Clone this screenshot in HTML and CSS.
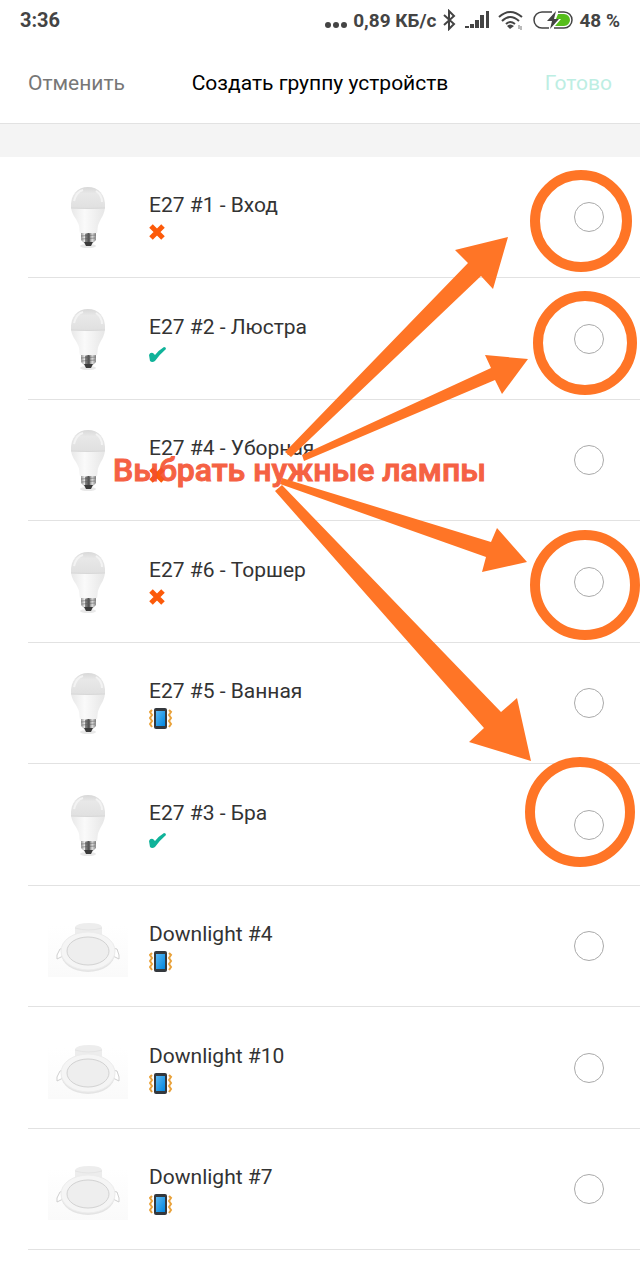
FILE: index.html
```html
<!DOCTYPE html>
<html lang="ru">
<head>
    <meta charset="UTF-8">
    <meta name="viewport" content="width=device-width, initial-scale=1.0">
    <title>Создать группу устройств</title>
    <link rel="stylesheet" href="styles.css">
</head>
<body>
    <!-- Shared icons -->
    <svg class="sprite" aria-hidden="true">
        <defs>
            <linearGradient id="dome" x1="0" y1="0" x2="0" y2="1">
                <stop offset="0" stop-color="#d8d8d8"/>
                <stop offset="0.3" stop-color="#e8e8e8"/>
                <stop offset="1" stop-color="#e0e0e0"/>
            </linearGradient>
            <linearGradient id="neck" x1="0" y1="0" x2="1" y2="0">
                <stop offset="0" stop-color="#e8e8e8"/>
                <stop offset="0.4" stop-color="#fafafa"/>
                <stop offset="1" stop-color="#e6e6e6"/>
            </linearGradient>
            <linearGradient id="metal" x1="0" y1="0" x2="1" y2="0">
                <stop offset="0" stop-color="#999"/>
                <stop offset="0.25" stop-color="#eee"/>
                <stop offset="0.5" stop-color="#555"/>
                <stop offset="0.75" stop-color="#ddd"/>
                <stop offset="1" stop-color="#888"/>
            </linearGradient>
            <linearGradient id="screen" x1="0" y1="0" x2="1" y2="1">
                <stop offset="0" stop-color="#5bb8f2"/>
                <stop offset="1" stop-color="#0086e0"/>
            </linearGradient>
            <linearGradient id="backdrop" x1="0" y1="0" x2="0" y2="1">
                <stop offset="0" stop-color="#fff"/>
                <stop offset="1" stop-color="#fafafa"/>
            </linearGradient>
        </defs>
        <symbol id="bulb" viewBox="0 0 80 80">
            <ellipse cx="40" cy="69" rx="8" ry="2" fill="#e8e8e8"/>
            <path d="M23 29C23 37 28 41 30 46C32 50 31 53 32 56H49C50 53 49 50 51 46C53 41 57 37 57 29Z" fill="url(#neck)"/>
            <path d="M23 31C22 17 30 10 40 10S58 17 57 31Q40 32 23 31Z" fill="url(#dome)"/>
            <path d="M23 31Q40 32 57 31" fill="none" stroke="#d8d8d8"/>
            <path d="M26 24Q28 15 35 13M48 14Q54 18 54 25" fill="none" stroke="#f3f3f3" stroke-width="2"/>
            <path d="M33 56H48V63L45 66H36L33 63Z" fill="url(#metal)"/>
            <path d="M33 59L48 58M34 62L47 61" stroke="#666" stroke-width="0.6"/>
            <path d="M37 57H42V66H37Z" fill="#555" opacity="0.6"/>
            <path d="M36 65H45L43 69H38Z" fill="#3b3b3b"/>
        </symbol>
        <symbol id="downlight" viewBox="0 0 80 80">
            <rect y="20" width="80" height="51" fill="url(#backdrop)"/>
            <path d="M27 30V21Q29 17 41 17Q53 17 54 21V30Z" fill="#ededed"/>
            <path d="M27 22Q40 26 54 22" fill="none" stroke="#e4e4e4"/>
            <path d="M16 42L12 43L9 49V53L15 50M64 42L69 43L71 49V53L65 50" fill="#fff" stroke="#cfcfcf" stroke-width="1"/>
            <ellipse cx="40" cy="47" rx="27" ry="19" fill="#e4e4e4"/>
            <ellipse cx="40" cy="45" rx="27" ry="19" fill="#f5f5f5" stroke="#ececec"/>
            <ellipse cx="40" cy="45" rx="21" ry="14" fill="#eee" stroke="#d2d2d2"/>
        </symbol>
        <symbol id="cross" viewBox="0 0 24 24">
            <path d="M2 5L14 17M14 5L2 17" stroke="#fc5a0a" stroke-width="5"/>
        </symbol>
        <symbol id="check" viewBox="0 0 24 24">
            <path d="M0 12Q1 9 4 10L6 12Q10 7 15 4Q17 4 17 6Q10 12 6 18Q3 20 1 18Z" fill="#10b39a"/>
        </symbol>
        <symbol id="phone" viewBox="0 0 24 24">
            <path d="M3 3L1 5L3 8L1 11L3 14L1 17L3 20M20 3L22 5L20 8L22 11L20 14L22 17L20 20" fill="none" stroke="#e9a23b" stroke-width="2"/>
            <rect x="5" y="1" width="13" height="21" rx="2" fill="#34383d"/>
            <rect x="7" y="4" width="9" height="15" fill="url(#screen)"/>
        </symbol>
    </svg>

    <div class="screen">
        <div class="status-bar">
            <span class="time">3:36</span>
            <div class="status-info">
                <svg class="dots" viewBox="0 0 22 22" aria-hidden="true">
                    <circle cx="3" cy="16" r="3"/><circle cx="11" cy="16" r="3"/><circle cx="19" cy="16" r="3"/>
                </svg>
                <span class="speed">0,89 КБ/с</span>
                <svg class="bluetooth" viewBox="0 0 14 22" aria-hidden="true">
                    <path d="M2 6L12 15L7 20V2L12 7L2 16" fill="none" stroke="#444" stroke-width="2"/>
                </svg>
                <svg class="signal" viewBox="0 0 24 22" aria-hidden="true">
                    <path d="M0 19V17H4V19ZM5 19V15H9V19ZM10 19V11H14V19ZM15 19V6H19V19ZM21 19V2H24V19Z"/>
                </svg>
                <svg class="wifi" viewBox="0 0 26 22" aria-hidden="true">
                    <path d="M1 8Q12 -2 24 8M4 12Q12 4 21 12M8 15Q12 11 17 15" fill="none" stroke="#444" stroke-width="2"/>
                    <path d="M9 17Q12 14 16 17L12 20Z"/>
                    <path d="M21 16V20M23 17V21" stroke="#777" stroke-width="1"/>
                </svg>
                <svg class="battery" viewBox="0 0 40 22" aria-hidden="true">
                    <path d="M25 5H31A6 6 0 0 1 31 17H22L28 10H23Z" fill="#56bd1b"/>
                    <path d="M19 3H9A8 8 0 0 0 9 19H16M25 3H31A8 8 0 0 1 31 19H21" fill="none" stroke="#444" stroke-width="1.5"/>
                    <path d="M23 2L14 12H19L17 20L26 10H21Z"/>
                </svg>
                <span class="charge">48 %</span>
            </div>
        </div>

        <header class="header">
            <button class="cancel" type="button">Отменить</button>
            <h1>Создать группу устройств</h1>
            <button class="done" type="button" disabled>Готово</button>
        </header>

        <form class="devices">
            <label class="device">
                <svg class="picture" aria-hidden="true"><use href="#bulb"/></svg>
                <span class="info">E27 #1 - Вход <svg class="state" aria-hidden="true"><use href="#cross"/></svg></span>
                <input type="checkbox" name="device">
            </label>
            <label class="device">
                <svg class="picture" aria-hidden="true"><use href="#bulb"/></svg>
                <span class="info">E27 #2 - Люстра <svg class="state" aria-hidden="true"><use href="#check"/></svg></span>
                <input type="checkbox" name="device">
            </label>
            <label class="device">
                <svg class="picture" aria-hidden="true"><use href="#bulb"/></svg>
                <span class="info">E27 #4 - Уборная <svg class="state" aria-hidden="true"><use href="#cross"/></svg></span>
                <input type="checkbox" name="device">
            </label>
            <label class="device">
                <svg class="picture" aria-hidden="true"><use href="#bulb"/></svg>
                <span class="info">E27 #6 - Торшер <svg class="state" aria-hidden="true"><use href="#cross"/></svg></span>
                <input type="checkbox" name="device">
            </label>
            <label class="device">
                <svg class="picture" aria-hidden="true"><use href="#bulb"/></svg>
                <span class="info">E27 #5 - Ванная <svg class="state" aria-hidden="true"><use href="#phone"/></svg></span>
                <input type="checkbox" name="device">
            </label>
            <label class="device">
                <svg class="picture" aria-hidden="true"><use href="#bulb"/></svg>
                <span class="info">E27 #3 - Бра <svg class="state" aria-hidden="true"><use href="#check"/></svg></span>
                <input type="checkbox" name="device">
            </label>
            <label class="device">
                <svg class="picture" aria-hidden="true"><use href="#downlight"/></svg>
                <span class="info">Downlight #4 <svg class="state" aria-hidden="true"><use href="#phone"/></svg></span>
                <input type="checkbox" name="device">
            </label>
            <label class="device">
                <svg class="picture" aria-hidden="true"><use href="#downlight"/></svg>
                <span class="info">Downlight #10 <svg class="state" aria-hidden="true"><use href="#phone"/></svg></span>
                <input type="checkbox" name="device">
            </label>
            <label class="device">
                <svg class="picture" aria-hidden="true"><use href="#downlight"/></svg>
                <span class="info">Downlight #7 <svg class="state" aria-hidden="true"><use href="#phone"/></svg></span>
                <input type="checkbox" name="device">
            </label>
        </form>

        <!-- Hint drawn over the list -->
        <svg class="hint" viewBox="0 0 640 1280">
            <text class="hint-text" x="113" y="481">Выбрать нужные лампы</text>
            <g class="hint-arrows">
                <path d="M285 452L468 263L455 250L508 237L493 289L481 276L291 457Z"/>
                <path d="M302 455L491 368L485 355L528 359L502 394L495 380L304 461Z"/>
                <path d="M282 478L491 542L497 528L527 562L482 572L486 557L280 484Z"/>
                <path d="M282 485L501 712L517 698L531 761L469 742L484 728L275 491Z"/>
            </g>
            <g class="hint-rings">
                <circle cx="581" cy="221" r="46"/>
                <circle cx="585" cy="343" r="47"/>
                <circle cx="585" cy="585" r="50"/>
                <circle cx="580" cy="812" r="50"/>
            </g>
        </svg>
    </div>
</body>
</html>
```
FILE: styles.css
```css
body {
    font-family: Roboto, "Noto Sans", sans-serif;
    margin: 0;
    background-color: #fff;
    color: #333;
}

.sprite {
    position: absolute;
    width: 0;
    height: 0;
}

.screen {
    position: relative;
    min-height: 100vh;
}

.status-bar {
    display: flex;
    justify-content: space-between;
    align-items: center;
    height: 40px;
    padding: 0 20px;
    color: #444;
    font-size: 20px;
    font-weight: 700;
}

.status-info {
    display: flex;
    align-items: center;
    gap: 6px;
}

.status-info svg {
    height: 22px;
    fill: #444;
}

.speed,
.charge {
    font-size: 19px;
}

.dots {
    width: 22px;
}

.bluetooth {
    width: 14px;
}

.signal {
    width: 24px;
    margin-left: 3px;
}

.wifi {
    width: 26px;
    margin-left: 3px;
}

.battery {
    width: 40px;
    margin-left: 3px;
}

.header {
    display: grid;
    grid-template-columns: 1fr auto 1fr;
    align-items: center;
    height: 80px;
    padding: 3px 28px 0;
    border-bottom: 1px solid #e2e2e2;
}

.header h1 {
    margin: 0;
    color: #000;
    font-size: 21px;
    font-weight: 400;
}

.header button {
    padding: 0;
    border: none;
    background: none;
    font-family: inherit;
    font-size: 21px;
    cursor: pointer;
}

.header .cancel {
    justify-self: start;
    color: #777;
}

.header .done {
    justify-self: end;
    color: #bdeee3;
}

.devices {
    display: grid;
    grid-auto-rows: minmax(121px, auto) minmax(122px, auto);
    border-top: 33px solid #f4f4f4;
}

.device {
    display: flex;
    align-items: center;
    box-sizing: border-box;
    margin-left: 28px;
    padding: 0 36px 0 20px;
    border-bottom: 1px solid #e2e2e2;
}

.picture {
    width: 80px;
    height: 80px;
    margin-right: 21px;
}

.info {
    flex: 1;
    padding-top: 2px;
    font-size: 21px;
    line-height: 28px;
}

.state {
    display: block;
    width: 24px;
    height: 24px;
    margin-top: 2px;
}

.device input {
    appearance: none;
    width: 30px;
    height: 30px;
    margin: 0;
    border: 1px solid #aaa;
    border-radius: 50%;
}

.device input:checked {
    border: 8px solid #10b39a;
}

.hint {
    position: absolute;
    top: 0;
    left: 0;
    width: 100%;
    pointer-events: none;
}

.hint-text {
    fill: #f4502f;
    stroke: #f4502f;
    stroke-width: 1px;
    opacity: 0.9;
    font-size: 32px;
    font-weight: 500;
}

.hint-arrows {
    fill: #ff7526;
}

.hint-rings {
    fill: none;
    stroke: #ff7526;
    stroke-width: 10px;
}
```
